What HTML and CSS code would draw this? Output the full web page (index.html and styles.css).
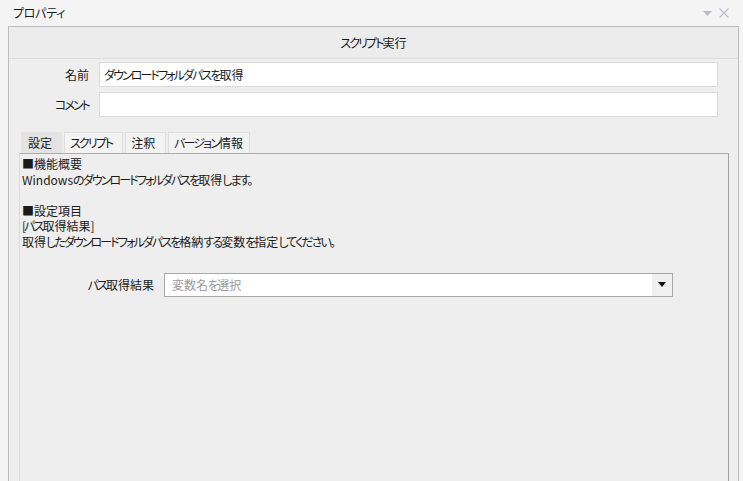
FILE: index.html
```html
<!DOCTYPE html>
<html lang="ja">
<head>
<meta charset="utf-8">
<link rel="stylesheet" href="styles.css">
</head>
<body>
<div class="titlebar">
  <span class="title">プロパティ</span>
  <span class="tools">
    <svg class="ico-down" width="9" height="5" viewBox="0 0 9 5"><path d="M0 0H9L4.5 5Z" fill="#b4bcc8"/></svg>
    <svg class="ico-close" width="10" height="10" viewBox="0 0 10 10"><path d="M0.5 0.5L9.5 9.5M9.5 0.5L0.5 9.5" stroke="#b4bcc8" stroke-width="1.2"/></svg>
  </span>
</div>
<div class="panel">
  <div class="header"><span class="n">スクリプト</span>実行</div>
  <div class="form">
    <div class="row">
      <label class="lbl">名前</label>
      <div class="input"><span class="n">ダウンロードフォルダパスを</span>取得</div>
    </div>
    <div class="row">
      <label class="lbl"><span class="n">コメント</span></label>
      <div class="input"></div>
    </div>
  </div>
  <div class="tabs">
    <div class="tab active">設定</div>
    <div class="tab"><span class="n">スクリプト</span></div>
    <div class="tab">注釈</div>
    <div class="tab"><span class="n">バージョン</span>情報</div>
  </div>
  <div class="tabpanel">
    <div class="desc">
      <div>■機能概要</div>
      <div>Windows<span class="n">のダウンロードフォルダパスを</span>取得<span class="n">します。</span></div>
      <div>&nbsp;</div>
      <div>■設定項目</div>
      <div><span class="n">[パス</span>取得結果]</div>
      <div>取得<span class="n">したダウンロードフォルダパスを</span>格納<span class="n">する</span>変数<span class="n">を</span>指定<span class="n">してください。</span></div>
    </div>
    <div class="combo-row">
      <label class="clbl"><span class="n">パス</span>取得結果</label>
      <div class="combo">
        <span class="placeholder">変数名<span class="n">を</span>選択</span>
        <span class="dd"><svg width="8" height="5" viewBox="0 0 8 5"><path d="M0 0H8L4 5Z" fill="#111"/></svg></span>
      </div>
    </div>
  </div>
</div>
</body>
</html>
```

FILE: styles.css
```css
html, body {
  margin: 0;
  padding: 0;
  height: 100%;
  overflow: hidden;
}
body {
  background: #f4f4f4;
  font-family: "Noto Sans CJK JP", "Noto Sans", sans-serif;
  font-feature-settings: "palt";
  font-size: 12px;
  color: #1a1a1a;
  display: flex;
  flex-direction: column;
}
.n {
  letter-spacing: -1.9px;
}
.titlebar {
  height: 26px;
  flex: none;
  display: flex;
  align-items: center;
  justify-content: space-between;
  padding: 0 14px 0 13px;
}
.title {
  font-size: 12px;
  line-height: 14px;
  letter-spacing: -0.3px;
}
.tools {
  display: flex;
  align-items: center;
  gap: 7px;
}
.ico-down { margin-top: 1px; }
.panel {
  flex: 1;
  margin: 0 4px 0 8px;
  border: 1px solid #bdbdbd;
  border-bottom: none;
  background: #eeeeee;
  display: flex;
  flex-direction: column;
}
.header {
  height: 31px;
  border-bottom: 1px solid #dcdcdc;
  background: #ececec;
  display: flex;
  align-items: center;
  justify-content: center;
  font-size: 12px;
}
.form {
  padding: 3px 20px 0 0;
  display: flex;
  flex-direction: column;
  gap: 5px;
}
.row {
  display: flex;
  align-items: center;
  gap: 10px;
}
.lbl {
  width: 80px;
  text-align: right;
}
.input {
  flex: 1;
  height: 23px;
  border: 1px solid #dadada;
  background: #fff;
  display: flex;
  align-items: center;
  padding-left: 4px;
}
.tabs {
  display: flex;
  gap: 2px;
  margin: 15px 0 0 12px;
  height: 21px;
}
.tab {
  border: 1px solid #dedede;
  border-bottom: none;
  background: #f3f3f3;
  padding: 0 10px 0 5px;
  display: flex;
  align-items: center;
  line-height: 14px;
}
.tab:last-child {
  padding-right: 6px;
}
.tab.active {
  background: #e3e3e3;
  border-color: #e3e3e3;
  padding: 0 9px 0 6px;
}
.tabpanel {
  flex: 1;
  margin: 0 9px 0 10px;
  border-top: 1px solid #acacac;
  border-left: 1px solid #dcdcdc;
  border-right: 1px solid #a0a0a0;
  background: #eeeeee;
  padding: 2px 0 0 2px;
}
.desc {
  line-height: 15.6px;
}
.combo-row {
  display: flex;
  align-items: center;
  margin-top: 23px;
  gap: 10px;
}
.clbl {
  width: 132px;
  text-align: right;
}
.combo {
  width: 507px;
  height: 22px;
  border: 1px solid #a9a9a9;
  background: #fff;
  display: flex;
  align-items: center;
  justify-content: space-between;
}
.placeholder {
  color: #9a9a9a;
  padding-left: 7px;
}
.dd {
  width: 20px;
  height: 100%;
  background: #f0f0f0;
  display: flex;
  align-items: center;
  justify-content: center;
}
```
